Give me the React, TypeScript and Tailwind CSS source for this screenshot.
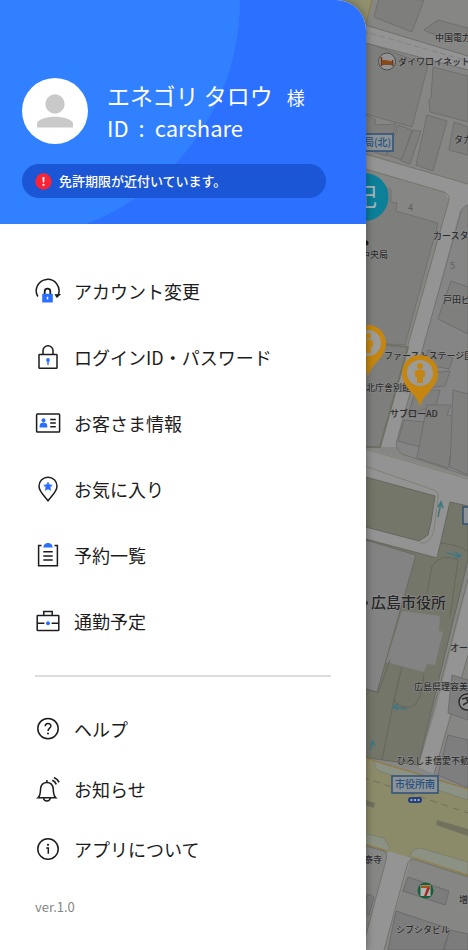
import type { ReactNode } from 'react';

type MenuItem = {
  readonly label: string;
  readonly href: string;
  readonly icon: ReactNode;
};

const BLUE = '#2b6fff';
const PIN = '#c48610';

const iconProps = {
  viewBox: '0 0 26 26',
  className: 'size-[26px] shrink-0',
  fill: 'none',
  stroke: '#1c1c1c',
  strokeWidth: 1.5,
  'aria-hidden': true,
} as const;

const MAIN_ITEMS: readonly MenuItem[] = [
  {
    label: 'アカウント変更',
    href: '#account',
    icon: (
      <svg {...iconProps}>
        <path d="M2.8 18.500A11.400 11.400 0 1 1 23.400 16.500" />
        <path d="M19.400 16.200l6.800-.2-4.400 4z" fill="#1c1c1c" stroke="none" />
        <path d="M9.700 16.500v-3a2.800 2.800 0 0 1 5.600 0v3" strokeWidth="1.800" />
        <path d="M7.200 15.800h10.600v8.700H7.200z" fill={BLUE} stroke="none" />
        <path d="M12.500 18.800v2.600" stroke="#fff" />
      </svg>
    ),
  },
  {
    label: 'ログインID・パスワード',
    href: '#login',
    icon: (
      <svg {...iconProps}>
        <path d="M8 10.500V6.800a5 5 0 0 1 10 0v3.700" />
        <rect x="4" y="10.500" width="18" height="13.800" rx=".6" />
        <circle cx="13" cy="16" r="1.900" fill={BLUE} stroke="none" />
        <path d="M13 16v5" stroke={BLUE} />
      </svg>
    ),
  },
  {
    label: 'お客さま情報',
    href: '#profile',
    icon: (
      <svg {...iconProps}>
        <rect x="1.600" y="4" width="23" height="18" rx=".8" />
        <circle cx="8.500" cy="10.200" r="2" fill={BLUE} stroke="none" />
        <path d="M4.600 17.600v-1.700c0-2.300 2-3.300 3.900-3.300s3.800 1 3.800 3.300v1.700z" fill={BLUE} stroke="none" />
        <path d="M15.200 9.500h5.600M15.200 13h5.600M15.200 16.800h5.600" />
      </svg>
    ),
  },
  {
    label: 'お気に入り',
    href: '#favorites',
    icon: (
      <svg {...iconProps}>
        <path d="M13 24.800C9.500 20 4 15.500 4 10.200a9 9 0 0 1 18 0C22 15.500 16.500 20 13 24.800z" />
        <path d="M13 6l1.300 2.800 3 .4-2.200 2.100.6 3.100-2.700-1.500-2.700 1.500.6-3.100-2.200-2.100 3-.4z" fill={BLUE} stroke={BLUE} strokeWidth=".6" />
      </svg>
    ),
  },
  {
    label: '予約一覧',
    href: '#reservations',
    icon: (
      <svg {...iconProps}>
        <path d="M6.500 3.500H3.600v20.300h18.800V3.500h-2.900" />
        <path d="M8.300 5.600C8.300 2.800 10.300 1 13 1s4.700 1.800 4.700 4.600z" fill={BLUE} stroke="none" />
        <path d="M8.300 9.800h9.400M8.300 13.900h9.400M8.300 17.900h9.400" />
      </svg>
    ),
  },
  {
    label: '通勤予定',
    href: '#commute',
    icon: (
      <svg {...iconProps}>
        <path d="M8.800 7.500V3.500h8.400v4" />
        <rect x="2.200" y="7.500" width="21.600" height="15" rx=".4" />
        <path d="M2.200 15.200h7.200M16.600 15.200h7.200" />
        <circle cx="13" cy="15.200" r="2" fill={BLUE} stroke="none" />
      </svg>
    ),
  },
];

const SUB_ITEMS: readonly MenuItem[] = [
  {
    label: 'ヘルプ',
    href: '#help',
    icon: (
      <svg {...iconProps}>
        <circle cx="13" cy="12.600" r="10.200" />
        <path d="M10.200 10.300c0-3.700 5.700-3.500 5.700-.3 0 2.100-2.900 2.300-2.900 5" />
        <circle cx="13" cy="17.500" r="1" fill="#1c1c1c" stroke="none" />
      </svg>
    ),
  },
  {
    label: 'お知らせ',
    href: '#news',
    icon: (
      <svg {...iconProps}>
        <path d="M3 21.700c2.600-2.200 2.200-5.200 2.600-9C6 9 8.400 6.500 11.900 6.500s5.900 2.500 6.300 6.200c.4 3.800 0 6.800 2.600 9z" />
        <path d="M11.900 6.500V4M8.500 22c.5 4 6.300 4 6.800 0" />
        <path d="M17.300 4.200c1.900.8 3.300 2.300 4 4.200M18.900 1.400c2.400 1 4.200 2.700 5.200 5" strokeWidth="1.600" />
      </svg>
    ),
  },
  {
    label: 'アプリについて',
    href: '#about',
    icon: (
      <svg {...iconProps}>
        <circle cx="13" cy="13" r="10.200" />
        <circle cx="13" cy="8.800" r="1.100" fill="#1c1c1c" stroke="none" />
        <path d="M11.300 11.900h2v5.800" />
      </svg>
    ),
  },
];

function MapPin({ x, y }: { readonly x: number; readonly y: number }) {
  return (
    <g transform={`translate(${x} ${y})`}>
      <path d="M0 34C-2 21-18 16-18 0a18 18 0 0 1 36 0C18 16 2 21 0 34z" fill={PIN} />
      <circle r="13" fill="#9b9b9a" />
      <circle cy="-7" r="3" fill={PIN} />
      <path d="M-5-2q5-3 10 0v6H3v6h-6V4h-2z" fill={PIN} />
    </g>
  );
}

function StreetMap() {
  return (
    <svg
      className="absolute inset-0 h-full w-full"
      viewBox="0 0 468 950"
      preserveAspectRatio="xMaxYMin slice"
      role="img"
      aria-label="地図"
      fontFamily='"Noto Sans CJK JP", sans-serif'
    >
      <rect width="468" height="950" fill="#868685" />

      {/* buildings, north side */}
      <g fill="#7e7e7c" stroke="#6f6f6d" strokeWidth="1">
        <path d="M379 -2L374 17 412 32 424 0z" />
        <path d="M424 30L438 20 468 28V42L430 33z" />
        <path d="M362 41L428 65 412 127 362 113z" />
        <path d="M433 67L468 76V122L430 112 429 100 431 98z" />
        <path d="M427 115L447 121 433 171 416 165z" />
        <path d="M398 125L412 130 402 160 387 155z" />
        <path d="M413 130L421 131 410 164 401 161z" />
        <path d="M362 113L376 120 374 125 396 124 386 156 362 148z" />
        <path d="M454 122L468 127V155L449 150z" />
      </g>

      <path d="M340 0H372L366 25 350 24z" fill="#90906e" />
      <path d="M350 21L366 24 372 0" fill="none" stroke="#8b7a45" />
      <path d="M362 24L468 56V70L362 42z" fill="#949494" />
      <path d="M362 24L468 56M362 42L468 70" fill="none" stroke="#70706a" />
      <path d="M362 31L468 61" fill="none" stroke="#828282" strokeDasharray="6 3" />

      {/* second street and the avenue running south */}
      <path d="M362 153L468 184V205L460 210 397 447 380 447 408 345 449 200 444 192 362 168z" fill="#949494" />
      <path d="M362 153L468 184M362 168L444 192Q450 195 449 200L408 345" fill="none" stroke="#74756a" />
      <path d="M362 175L391 190V202L397 203 396 211 438 223 405 345 362 342z" fill="#7e7e7c" stroke="#72726c" />
      <path d="M362 342L408 347 380 447 362 447z" fill="#7e7e7c" stroke="#6f7064" strokeWidth="2" />
      <path d="M468 205Q463 206 461 212L397 440Q394 448 402 454L468 476z" fill="#858585" stroke="#72736c" />
      <g fill="#7f7f7e" stroke="#6e6e6e">
        <path d="M451 281L468 287V334L438 319z" />
        <path d="M428 350L453 358 449 369 424 364z" />
        <path d="M420 374L450 371 445 386 417 389z" />
        <path d="M416 390L440 390 436 405 408 415z" />
        <path d="M404 420L424 422 420 447 398 441z" />
        <path d="M427 405L451 405 447 415 457 417 448 468 417 458z" />
        <path d="M453 390L468 394V475L450 467z" />
      </g>
      <text x="450" y="269" fontSize="9" fill="#5c5c5c">5</text>
      <text x="408" y="211" fontSize="9" fill="#5c5c5c">4</text>

      {/* wide crossing above the city hall */}
      <path d="M362 447L468 478V510L450 502 437 558 362 538z" fill="#939393" />
      <path d="M362 448L468 479M362 465L434 490Q439 492 438 498L434 530Q430 545 420 543" fill="none" stroke="#7e8274" />
      <path d="M362 476L435 496 431 522 428 535 419 541 362 526z" fill="#75766a" stroke="#65665c" />
      <path d="M450 502L468 506V560L418 765 362 757V538L437 558z" fill="#75766a" stroke="#66675d" />
      <path d="M427 593L432 566Q441 552 458 560L450 617M468 552Q461 545 440 543" fill="none" stroke="#66675b" />
      <path d="M362 539L416 555 377 692 362 688z" fill="#838383" stroke="#686960" strokeWidth="1" />
      <path d="M402 611L440 616 439 631 443 632 435 665 427 664 424 672 386 662z" fill="#838383" />
      <path d="M402 667L394 699Q396 708 411 707Q422 703 424 674" fill="none" stroke="#64655a" />
      <path d="M468 582L435 712 418 767 434 774 468 655z" fill="#949494" />
      <path d="M468 579L418 767M468 655L434 774" fill="none" stroke="#70736a" />
      <path d="M452 675L468 680V720L448 713zM448 735L468 740V788L438 775z" fill="#7e7e7e" stroke="#6d6d6d" />
      <path d="M362 688L378 693 390 660M382 760L394 700" fill="none" stroke="#65665c" />

      {/* main road */}
      <path d="M362 757L468 789V876L362 844z" fill="#8c8b69" />
      <path d="M374 761L468 789V800L382 772Q374 770 374 761zM362 833L384 838 390 848 388 852 362 844zM410 857Q411 848 420 848L468 862V876L410 858z" fill="#8b9183" stroke="#7c806c" />
      <path d="M362 757L468 789M362 843L388 851M412 857L468 875" fill="none" stroke="#98793a" />
      <path d="M362 777L468 813" fill="none" stroke="#716f58" strokeDasharray="7 5" />
      <path d="M362 799L375 803 374 808 362 804zM437 820L468 829V836L436 825z" fill="#72715e" />
      <path d="M388 851L411 858 384 950H362z" fill="#949494" />
      <path d="M362 845L384 851Q388 854 386 860L362 950M468 877L416 860Q409 857 407 866L384 950" fill="none" stroke="#70736a" />
      <path d="M408 877L449 891 445 905 403 891zM396 911L450 929 443 950H388zM368 894L374 897 369 915 362 912zM450 930L468 934V950H444z" fill="#7c7c7c" stroke="#6c6c6c" />

      {/* one-way arrows */}
      <g fill="none" stroke="#3f7780" strokeWidth="1.500">
        <path d="M438 517L441 503M438 507L441 502 443 508" />
        <path d="M447 553L460 556M455 552L461 556 455 558" />
        <path d="M407 709L394 707M398 704L393 707 398 710" />
        <path d="M370 750L373 742M370 745L373 741 375 746" />
      </g>

      {/* spots */}
      <circle cx="387" cy="61.500" r="8.500" fill="#929291" stroke="#4d4d4d" />
      <path d="M381.500 57v9M381.500 64h11v2M392.500 60v6" fill="none" stroke="#6c3614" strokeWidth="1.500" />
      <path d="M382 60h4l6 1.500V64h-10z" fill="#8a4a18" />
      <rect x="350" y="134" width="43" height="17" fill="#8d9296" stroke="#2c5277" strokeWidth="1.500" />
      <circle cx="364.500" cy="197" r="24" fill="#0c7f99" />
      <circle cx="366" cy="243" r="2.500" fill="#1c1c1c" />
      <circle cx="366" cy="603" r="2" fill="#3b3b3b" />
      <rect x="392" y="776" width="46" height="17" fill="#8d9296" stroke="#2c5277" strokeWidth="1.500" />
      <rect x="408" y="797" width="14" height="6" rx="3" fill="#24407c" />
      <path d="M410.500 800h9" stroke="#a0a8b8" strokeWidth="2" strokeDasharray="2 1.500" />
      <rect x="463" y="507" width="12" height="17" fill="#8d9296" stroke="#2c5277" strokeWidth="1.500" />
      <circle cx="467" cy="702" r="8" fill="#8e8e8e" stroke="#2c2c2c" strokeWidth="1.500" />
      <path d="M462 699l8-2M463 705l8-5M466 697l4 10" stroke="#2c2c2c" strokeWidth="1.500" />
      <circle cx="425.500" cy="890.500" r="8" fill="#13603a" />
      <path d="M420.500 885h10v11h-10z" fill="#b3b3b3" />
      <path d="M421 885.500h9v2.500h-9z" fill="#a3541c" />
      <path d="M427 888h3l-3.500 8H424z" fill="#a32a20" />

      {/* place names */}
      <g fontSize="9" fontWeight="500" fill="#2c2c2c" stroke="#929292" strokeWidth="1" paintOrder="stroke" strokeLinejoin="round">
        <text x="435" y="41">中国電力</text>
        <text x="398" y="65">ダイワロイネット</text>
        <text x="454" y="143">タカ</text>
        <text x="433" y="239">カースタ</text>
        <text x="361" y="258">中央局</text>
        <text x="443" y="303">戸田ビ</text>
        <text x="384" y="359">ファーストステージ国</text>
        <text x="366" y="391">北庁舎別館</text>
        <text x="450" y="651">オー</text>
        <text x="414" y="690">広島県理容美</text>
        <text x="397" y="764">ひろしま信愛不動</text>
        <text x="364" y="863">泰寺</text>
        <text x="459" y="903">増</text>
        <text x="396" y="933">シブシタビル</text>
      </g>
      <text x="371" y="608" fontSize="15" fontWeight="500" fill="#262626" stroke="#929292" strokeWidth="1" paintOrder="stroke">広島市役所</text>
      <g fontSize="10" fontWeight="500" fill="#23507e">
        <text x="364" y="146">局(北)</text>
        <text x="395" y="788">市役所南</text>
      </g>
      <text x="352" y="206" fontSize="25" fill="#a5b6ba">記</text>

      <MapPin x={368} y={343} />
      <MapPin x={420} y={373} />
      <text x="390" y="417" fontSize="9" fontWeight="500" fill="#2c2c2c">サブローAD</text>
    </svg>
  );
}

function MenuLink({ item }: { readonly item: MenuItem }) {
  return (
    <a href={item.href} className="flex h-full items-center gap-[13px] text-[18px] leading-7 text-[#1c1c1c]">
      {item.icon}
      <span>{item.label}</span>
    </a>
  );
}

function DrawerHeader() {
  return (
    <header className="relative overflow-hidden rounded-tr-[30px] bg-[#2c70ff] pt-[78px] pr-10 pb-[26px] pl-[22px] text-white">
      <div className="absolute -top-60 -left-60 size-[480px] rounded-full bg-[#3080ff]" />
      <div className="relative flex items-center gap-[19px]">
        <div className="grid size-[66px] shrink-0 place-items-center rounded-full bg-white">
          <svg viewBox="0 0 36 34" className="h-[34px] w-9" fill="#c9c9c9" aria-hidden="true">
            <circle cx="18" cy="10" r="9.700" />
            <path d="M0 33.500v-3.800C0 25 11 22.700 18 22.700s18 2.300 18 7v3.800z" />
          </svg>
        </div>
        <div className="leading-[30px] whitespace-nowrap">
          <p className="flex items-baseline gap-3.5 text-[23px]">
            エネゴリ タロウ <span className="text-[18px]">様</span>
          </p>
          <p className="flex gap-2.5 text-[22px]">
            <span>ID</span>
            <span>:</span>
            <span>carshare</span>
          </p>
        </div>
      </div>
      <p className="relative mt-5 flex h-[34px] items-center gap-[7px] rounded-full bg-[#1b56d6] pl-[13px] text-[13px] font-medium">
        <svg viewBox="0 0 17 17" className="size-[17px] shrink-0" aria-hidden="true">
          <circle cx="8.500" cy="8.500" r="8.200" fill="#fb2335" />
          <path d="M7.400 4h2.200l-.4 5.500H7.800z" fill="#fff" />
          <circle cx="8.500" cy="11.800" r="1.100" fill="#fff" />
        </svg>
        免許期限が近付いています。
      </p>
    </header>
  );
}

export default function App() {
  return (
    <main className="relative min-h-screen overflow-hidden font-['Noto_Sans_CJK_JP',sans-serif]">
      <StreetMap />
      <aside className="relative flex min-h-screen w-[78.2%] flex-col rounded-tr-[30px] bg-white shadow-[0_0_8px_rgba(0,0,0,0.4)]">
        <DrawerHeader />
        <nav className="px-[35px] pt-[34px]" aria-label="メニュー">
          <ul>
            {MAIN_ITEMS.map((item) => (
              <li key={item.href} className="h-[66px]">
                <MenuLink item={item} />
              </li>
            ))}
          </ul>
          <ul className="mt-[21px] border-t-2 border-[#dcdcdc] pt-[22px]">
            {SUB_ITEMS.map((item) => (
              <li key={item.href} className="h-[60px]">
                <MenuLink item={item} />
              </li>
            ))}
          </ul>
        </nav>
        <p className="px-[35px] pt-[18px] pb-8 text-[13px] leading-5 text-[#858585]">ver.1.0</p>
      </aside>
    </main>
  );
}
